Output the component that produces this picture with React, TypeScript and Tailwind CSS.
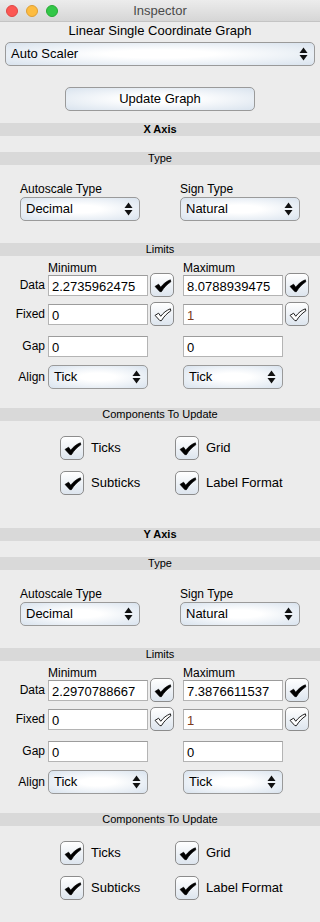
import React from 'react';

const font = { fontFamily: '"Liberation Sans", Arial, sans-serif' };

function Arrows() {
  return (
    <svg width="9" height="14" viewBox="0 0 9 14" className="shrink-0">
      <path d="M4.5 0.5 L8.5 6 L0.5 6 Z" fill="#111" />
      <path d="M4.5 13.5 L8.5 8 L0.5 8 Z" fill="#111" />
    </svg>
  );
}

function Popup({ label, className }: { label: string; className: string }) {
  return (
    <div
      className={`h-[24px] flex items-center justify-between pl-[5px] pr-[6px] rounded-[5px] border border-[#9a9a9a] bg-[radial-gradient(ellipse_at_center,#ffffff_25%,#d9e3ee_100%)] text-[13px] text-black ${className}`}
    >
      <span>{label}</span>
      <Arrows />
    </div>
  );
}

function Bar({ title, bold }: { title: string; bold?: boolean }) {
  return (
    <div className={`h-[13px] bg-[#d9d9d9] text-center text-[11px] leading-[13px] text-black ${bold ? 'font-bold' : ''}`}>
      {title}
    </div>
  );
}

function CheckMark({ outline }: { outline?: boolean }) {
  return (
    <svg width="21" height="21" viewBox="0 0 24 24">
      <path
        d="M3.5 13 L7.5 10.5 L10 14 C13 10 16.5 7.2 21 5.5 L21.5 7.8 C17 10.8 13.5 14.5 10.8 19 L9 19 Z"
        fill={outline ? '#fff' : '#000'}
        stroke="#000"
        strokeWidth={outline ? 1 : 0.8}
        strokeLinejoin="round"
      />
    </svg>
  );
}

function CheckButton({ outline }: { outline?: boolean }) {
  return (
    <div className="w-[24px] h-[24px] shrink-0 flex items-center justify-center rounded-[5px] border border-[#8c8c8c] bg-[linear-gradient(to_bottom,#ffffff,#dde5ee)]">
      <CheckMark outline={outline} />
    </div>
  );
}

function Field({ value, muted }: { value: string; muted?: boolean }) {
  return (
    <div
      className={`w-[100px] h-[21px] shrink-0 bg-white border border-[#b4b4b4] border-t-[#9c9c9c] pl-[3px] pt-[3px] text-[13px] leading-[16px] ${muted ? 'text-[#7b3a1c]' : 'text-black'}`}
    >
      {value}
    </div>
  );
}

function LimitRow({
  label,
  left,
  right,
  check,
}: {
  label: string;
  left: React.ReactNode;
  right: React.ReactNode;
  check?: 'solid' | 'outline';
}) {
  return (
    <div className="h-[24px] flex items-center">
      <div className="w-[45px] text-right text-[12px]">{label}</div>
      <div className="ml-[3px] flex items-center gap-[2px] w-[135px]">
        {left}
        {check && <CheckButton outline={check === 'outline'} />}
      </div>
      <div className="flex items-center gap-[2px]">
        {right}
        {check && <CheckButton outline={check === 'outline'} />}
      </div>
    </div>
  );
}

function Option({ label }: { label: string }) {
  return (
    <div className="flex items-center gap-[7px] w-[115px]">
      <div className="w-[24px] h-[24px] shrink-0 flex items-center justify-center rounded-[5px] border border-[#8c8c8c] bg-[linear-gradient(to_bottom,#ffffff,#dde5ee)]">
        <CheckMark />
      </div>
      <span className="text-[13px]">{label}</span>
    </div>
  );
}

function AxisSection({ name, min, max }: { name: string; min: string; max: string }) {
  return (
    <div>
      <Bar title={name} bold />
      <div className="mt-[16px]">
        <Bar title="Type" />
      </div>
      <div className="mt-[17px] flex gap-[40px] pl-[20px]">
        <div>
          <div className="text-[12px] leading-[14px] mb-[1px]">Autoscale Type</div>
          <Popup label="Decimal" className="w-[120px]" />
        </div>
        <div>
          <div className="text-[12px] leading-[14px] mb-[1px]">Sign Type</div>
          <Popup label="Natural" className="w-[120px]" />
        </div>
      </div>
      <div className="mt-[22px]">
        <Bar title="Limits" />
      </div>
      <div className="mt-[5px] flex text-[12px] leading-[14px]">
        <div className="ml-[48px] w-[135px]">Minimum</div>
        <div>Maximum</div>
      </div>
      <div className="mt-[-2px] flex flex-col">
        <LimitRow label="Data" left={<Field value={min} />} right={<Field value={max} />} check="solid" />
        <div className="mt-[5px]">
          <LimitRow label="Fixed" left={<Field value="0" />} right={<Field value="1" muted />} check="outline" />
        </div>
        <div className="mt-[8px]">
          <LimitRow label="Gap" left={<Field value="0" />} right={<Field value="0" />} />
        </div>
        <div className="mt-[7px]">
          <LimitRow
            label="Align"
            left={<Popup label="Tick" className="w-[100px]" />}
            right={<Popup label="Tick" className="w-[100px]" />}
          />
        </div>
      </div>
      <div className="mt-[19px]">
        <Bar title="Components To Update" />
      </div>
      <div className="mt-[15px] pl-[60px] flex flex-col gap-[11px]">
        <div className="flex">
          <Option label="Ticks" />
          <Option label="Grid" />
        </div>
        <div className="flex">
          <Option label="Subticks" />
          <Option label="Label Format" />
        </div>
      </div>
    </div>
  );
}

export default function App() {
  return (
    <div className="w-[320px] h-[922px] overflow-hidden bg-[#ececec] text-black" style={font}>
      <div className="h-[22px] grid grid-cols-[1fr_auto_1fr] items-center border-b border-[#c4c4c4] bg-[linear-gradient(to_bottom,#ececec,#d6d6d6)]">
        <div className="flex items-center gap-[8px] pl-[6px]">
          <span className="w-[12px] h-[12px] rounded-full bg-[#fc5753] border border-[#df4744]" />
          <span className="w-[12px] h-[12px] rounded-full bg-[#fdbc40] border border-[#de9f34]" />
          <span className="w-[12px] h-[12px] rounded-full bg-[#33c748] border border-[#27aa35]" />
        </div>
        <div className="text-[13px] text-[#4a4a4a]">Inspector</div>
        <div />
      </div>

      <div className="h-[20px] text-center text-[13px] leading-[17px]">Linear Single Coordinate Graph</div>

      <Popup label="Auto Scaler" className="mx-[5px]" />

      <div className="mt-[21px] mx-auto w-[190px] h-[24px] flex items-center justify-center rounded-[5px] border border-[#9a9a9a] bg-[radial-gradient(ellipse_at_center,#ffffff_25%,#d9e3ee_100%)] text-[13px]">
        Update Graph
      </div>

      <div className="mt-[12px]">
        <AxisSection name="X Axis" min="2.2735962475" max="8.0788939475" />
      </div>
      <div className="mt-[33px]">
        <AxisSection name="Y Axis" min="2.2970788667" max="7.3876611537" />
      </div>
    </div>
  );
}
